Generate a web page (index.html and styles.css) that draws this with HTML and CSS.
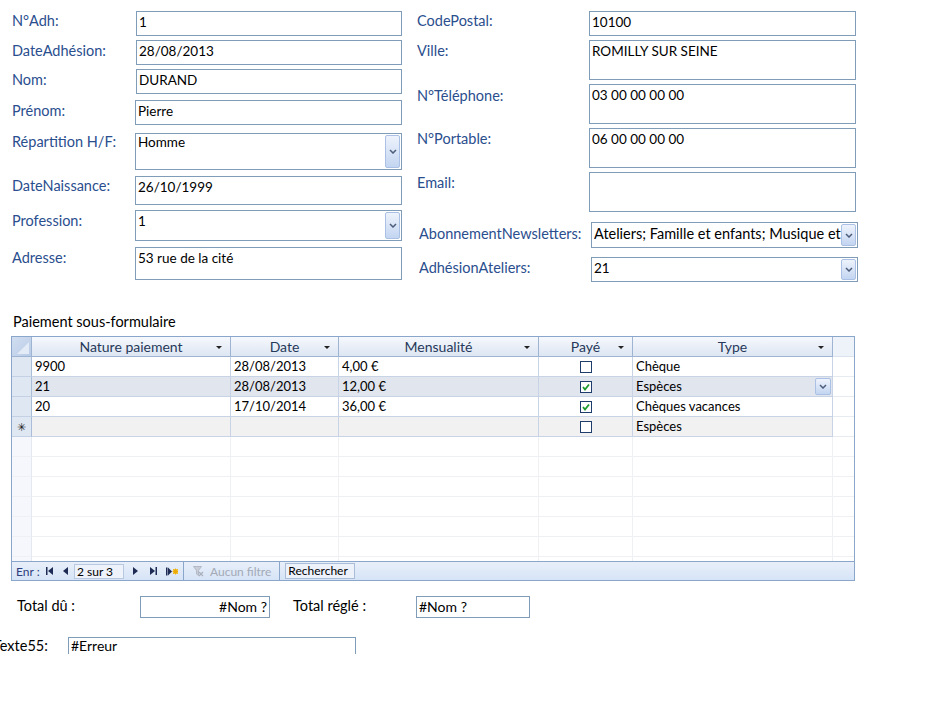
FILE: index.html
```html
<!DOCTYPE html>
<html lang="fr">
<head>
<meta charset="utf-8">
<title>Adhérent</title>
<link rel="stylesheet" href="styles.css">
</head>
<body>
<div class="form">
  <div class="top">
    <div class="col col-left">
      <div class="row m11"><span class="lbl lbl-up">N°Adh:</span><div class="field h25"><span class="val">1</span></div></div>
      <div class="row m4"><span class="lbl">DateAdhésion:</span><div class="field h25"><span class="val">28/08/2013</span></div></div>
      <div class="row m4"><span class="lbl">Nom:</span><div class="field h25"><span class="val">DURAND</span></div></div>
      <div class="row m6 shift"><span class="lbl">Prénom:</span><div class="field h25"><span class="val">Pierre</span></div></div>
      <div class="row m8 shift"><span class="lbl lbl-hi">Répartition H/F:</span><div class="field h37 combo"><span class="val val-hi">Homme</span><span class="dd"><svg width="8" height="5" viewBox="0 0 8 5"><polyline points="1,1 4,4 7,1" fill="none" stroke="#4d5d7c" stroke-width="1.5"/></svg></span></div></div>
      <div class="row m6 shift"><span class="lbl lbl-up">DateNaissance:</span><div class="field h29"><span class="val">26/10/1999</span></div></div>
      <div class="row m5 shift"><span class="lbl">Profession:</span><div class="field h31 combo"><span class="val">1</span><span class="dd"><svg width="8" height="5" viewBox="0 0 8 5"><polyline points="1,1 4,4 7,1" fill="none" stroke="#4d5d7c" stroke-width="1.5"/></svg></span></div></div>
      <div class="row m6 shift"><span class="lbl">Adresse:</span><div class="field h33"><span class="val">53 rue de la cité</span></div></div>
    </div>
    <div class="col col-right">
      <div class="row m11"><span class="lbl lbl-up">CodePostal:</span><div class="field h25"><span class="val">10100</span></div></div>
      <div class="row m4"><span class="lbl">Ville:</span><div class="field h40"><span class="val">ROMILLY SUR SEINE</span></div></div>
      <div class="row m4"><span class="lbl lbl-lo">N°Téléphone:</span><div class="field h40"><span class="val">03 00 00 00 00</span></div></div>
      <div class="row m4"><span class="lbl">N°Portable:</span><div class="field h40"><span class="val">06 00 00 00 00</span></div></div>
      <div class="row m4"><span class="lbl">Email:</span><div class="field h40"><span class="val"></span></div></div>
      <div class="row m10 nudge"><span class="lbl lbl-lo">AbonnementNewsletters:</span><div class="field h26 combo"><span class="val val-big">Ateliers; Famille et enfants; Musique et</span><span class="dd"><svg width="8" height="5" viewBox="0 0 8 5"><polyline points="1,1 4,4 7,1" fill="none" stroke="#4d5d7c" stroke-width="1.5"/></svg></span></div></div>
      <div class="row m9 nudge"><span class="lbl">AdhésionAteliers:</span><div class="field h25 combo"><span class="val">21</span><span class="dd"><svg width="8" height="5" viewBox="0 0 8 5"><polyline points="1,1 4,4 7,1" fill="none" stroke="#4d5d7c" stroke-width="1.5"/></svg></span></div></div>
    </div>
  </div>

  <div class="subform">
    <div class="sub-title">Paiement sous-formulaire</div>
    <div class="sheet">
      <div class="grid">
        <div class="c hd corner"></div>
        <div class="c hd">Nature paiement<span class="tri"></span></div>
        <div class="c hd">Date<span class="tri"></span></div>
        <div class="c hd">Mensualité<span class="tri"></span></div>
        <div class="c hd">Payé<span class="tri"></span></div>
        <div class="c hd">Type<span class="tri"></span></div>
        <div class="c hd fill"></div>

        <div class="c sel"></div>
        <div class="c">9900</div>
        <div class="c">28/08/2013</div>
        <div class="c">4,00 €</div>
        <div class="c ctr"><span class="chk"></span></div>
        <div class="c">Chèque</div>
        <div class="c fill"></div>

        <div class="c sel"></div>
        <div class="c cur">21</div>
        <div class="c cur">28/08/2013</div>
        <div class="c cur">12,00 €</div>
        <div class="c cur ctr"><span class="chk on"><svg width="10" height="10" viewBox="0 0 10 10"><polyline points="2,5 4,7.5 8,2.5" fill="none" stroke="#1f9a2e" stroke-width="1.8"/></svg></span></div>
        <div class="c cur type-cur">Espèces<span class="dd dd-grid"><svg width="8" height="5" viewBox="0 0 8 5"><polyline points="1,1 4,4 7,1" fill="none" stroke="#4d5d7c" stroke-width="1.5"/></svg></span></div>
        <div class="c fill"></div>

        <div class="c sel"></div>
        <div class="c">20</div>
        <div class="c">17/10/2014</div>
        <div class="c">36,00 €</div>
        <div class="c ctr"><span class="chk on"><svg width="10" height="10" viewBox="0 0 10 10"><polyline points="2,5 4,7.5 8,2.5" fill="none" stroke="#1f9a2e" stroke-width="1.8"/></svg></span></div>
        <div class="c">Chèques vacances</div>
        <div class="c fill"></div>

        <div class="c sel star">&#x2733;</div>
        <div class="c nw"></div>
        <div class="c nw"></div>
        <div class="c nw"></div>
        <div class="c nw ctr"><span class="chk"></span></div>
        <div class="c nw">Espèces</div>
        <div class="c fill"></div>

        <div class="c e sel-e"></div><div class="c e"></div><div class="c e"></div><div class="c e"></div><div class="c e"></div><div class="c e"></div><div class="c e"></div>
        <div class="c e sel-e"></div><div class="c e"></div><div class="c e"></div><div class="c e"></div><div class="c e"></div><div class="c e"></div><div class="c e"></div>
        <div class="c e sel-e"></div><div class="c e"></div><div class="c e"></div><div class="c e"></div><div class="c e"></div><div class="c e"></div><div class="c e"></div>
        <div class="c e sel-e"></div><div class="c e"></div><div class="c e"></div><div class="c e"></div><div class="c e"></div><div class="c e"></div><div class="c e"></div>
        <div class="c e sel-e"></div><div class="c e"></div><div class="c e"></div><div class="c e"></div><div class="c e"></div><div class="c e"></div><div class="c e"></div>
        <div class="c e sel-e"></div><div class="c e"></div><div class="c e"></div><div class="c e"></div><div class="c e"></div><div class="c e"></div><div class="c e"></div>
        <div class="c e sel-e"></div><div class="c e"></div><div class="c e"></div><div class="c e"></div><div class="c e"></div><div class="c e"></div><div class="c e"></div>
      </div>
      <div class="nav">
        <span class="enr">Enr :</span>
        <svg class="ic ic-first" width="7" height="8" viewBox="0 0 7 8"><rect x="0" y="0" width="1.5" height="8" fill="#1d2b55"/><polygon points="7,0 7,8 2,4" fill="#1d2b55"/></svg>
        <svg class="ic ic-prev" width="5" height="8" viewBox="0 0 5 8"><polygon points="5,0 5,8 0,4" fill="#1d2b55"/></svg>
        <span class="pos">2 sur 3</span>
        <svg class="ic ic-next" width="5" height="8" viewBox="0 0 5 8"><polygon points="0,0 0,8 5,4" fill="#1d2b55"/></svg>
        <svg class="ic ic-last" width="7" height="8" viewBox="0 0 7 8"><polygon points="0,0 0,8 5,4" fill="#1d2b55"/><rect x="5.5" y="0" width="1.5" height="8" fill="#1d2b55"/></svg>
        <svg class="ic ic-new" width="12" height="9" viewBox="0 0 12 9"><rect x="0" y="0.5" width="1.5" height="8" fill="#1d2b55"/><polygon points="2,0.5 2,8.5 6,4.5" fill="#1d2b55"/><rect x="7" y="2" width="5" height="5" fill="#f2c53d"/><path d="M9.5 1.5v6M6.5 4.5h6M7.5 2.5l4 4M11.5 2.5l-4 4" stroke="#e8a400" stroke-width="0.8"/></svg>
        <span class="sep sep1"></span>
        <svg class="ic ic-filter" width="11" height="11" viewBox="0 0 11 11"><path d="M0.5 0.5h8l-3 4v5l-2-1.5v-3.5z" fill="#c9ced8" stroke="#a9b0bc" stroke-width="0.8"/><path d="M6 6l4 4M10 6l-4 4" stroke="#a9b0bc" stroke-width="1.2"/></svg>
        <span class="nofilter">Aucun filtre</span>
        <span class="sep sep2"></span>
        <span class="search">Rechercher</span>
      </div>
    </div>
  </div>

  <div class="totals">
    <span class="tlbl">Total dû :</span>
    <div class="tbox tbox1">#Nom ?</div>
    <span class="tlbl tlbl2">Total réglé :</span>
    <div class="tbox tbox2">#Nom ?</div>
  </div>

  <div class="texte">
    <span class="xlbl">Texte55:</span>
    <div class="xbox">#Erreur</div>
  </div>
</div>
</body>
</html>
```

FILE: styles.css
```css
* { box-sizing: border-box; }
html, body { margin: 0; padding: 0; background: #fff; }
body { font-family: Lato, "Open Sans", "Liberation Sans", sans-serif; font-size: 14px; color: #000; }

.form { width: 938px; height: 654px; overflow: hidden; }

/* ---------- top form ---------- */
.top { display: flex; gap: 15px; padding-left: 12px; }
.col { display: flex; flex-direction: column; }
.col-left .lbl { width: 124px; }
.col-left .field { width: 266px; }
.col-right .lbl { width: 172px; }
.col-right .field { width: 267px; }

.row { display: flex; align-items: flex-start; }
.row.shift .field { margin-left: -1px; width: 267px; }
.row.nudge .lbl { padding-left: 2px; }
.row.nudge .field { margin-left: 2px; }
.m4 { margin-top: 4px; }
.m5 { margin-top: 5px; }
.m6 { margin-top: 6px; }
.m8 { margin-top: 8px; }
.m9 { margin-top: 9px; }
.m10 { margin-top: 10px; }
.m11 { margin-top: 11px; }

.lbl { color: #2a4e8e; font-size: 14.5px; line-height: 18px; padding-top: 2px; white-space: nowrap; }
.lbl-up { padding-top: 1px; }
.lbl-hi { padding-top: 0; }
.lbl-lo { padding-top: 3px; }

.field { border: 1px solid #7f9db9; background: #fff; display: flex; align-items: flex-start; padding: 1px 1px 1px 2px; }
.h25 { height: 25px; }
.h26 { height: 26px; }
.h29 { height: 29px; }
.h31 { height: 31px; }
.h33 { height: 33px; }
.h37 { height: 37px; }
.h40 { height: 40px; }
.val { flex: 1; font-size: 13.5px; line-height: 18px; padding-top: 0; white-space: nowrap; overflow: hidden; }
.val-hi { margin-top: -2px; }
.val-big { font-size: 14.5px; padding-top: 1px; }

.combo { align-items: stretch; }
.dd { width: 15px; flex: none; border: 1px solid #aac1e5; border-radius: 2px;
  background: linear-gradient(#eef3fc, #c3d5f1); display: flex; align-items: center; justify-content: center; }

/* ---------- subform ---------- */
.subform { padding-left: 11px; margin-top: 31px; }
.sub-title { font-size: 14.5px; line-height: 18px; padding-left: 2px; margin-bottom: 5px; }
.sheet { width: 844px; height: 245px; border: 1px solid #8ba6cb; display: flex; flex-direction: column; }
.grid { height: 224px; overflow: hidden; display: grid;
  grid-template-columns: 20px 199px 108px 200px 94px 200px 21px; grid-auto-rows: 20px; }

.c { border-right: 1px solid #c8d4e6; border-bottom: 1px solid #c8d4e6; padding-left: 3px;
  line-height: 19px; font-size: 13px; white-space: nowrap; overflow: hidden; color: #000; }
.hd { position: relative; text-align: center; padding-left: 0; color: #27395a; font-size: 14px;
  background: linear-gradient(#f6f8fc, #dde6f3); border-right-color: #9fb4d3; border-bottom-color: #9fb4d3; }
.hd .tri { position: absolute; right: 8px; top: 9px; width: 0; height: 0;
  border-left: 3px solid transparent; border-right: 3px solid transparent; border-top: 3px solid #222; }
.corner { background: linear-gradient(135deg, #d2def0 0%, #b8cbe7 100%); position: relative; }
.corner::after { content: ""; position: absolute; right: 2px; bottom: 2px; width: 0; height: 0;
  border-left: 12px solid transparent; border-bottom: 12px solid #e3ebf6; }
.hd.fill { background: #eef2f9; border-right: none; border-bottom-color: #dbe3ef; }
.sel { background: #dfe7f3; border-right-color: #a9bcd8; border-bottom-color: #c4d1e5; padding-left: 0; }
.star { text-align: center; font-size: 11px; color: #222; line-height: 19px; }
.fill { border-right: none; border-bottom-color: #e6ebf2; background: #fff; }
.cur { background: #e0e5ee; }
.nw { background: #f1f1f1; }
.ctr { display: flex; align-items: center; justify-content: center; padding-left: 0; }
.chk { width: 12px; height: 12px; border: 1px solid #1e3d6d; background: #fff; display: flex; align-items: center; justify-content: center; }
.type-cur { display: flex; align-items: center; justify-content: space-between; padding-right: 1px; }
.dd-grid { height: 17px; width: 16px; }
.e { border-right-color: #eef0f4; border-bottom-color: #eef0f4; background: #fff; }
.sel-e { background: #f5f7fc; border-right-color: #e3e8f1; }
.e:nth-child(7n) { border-right: none; }

.nav { height: 19px; border-top: 1px solid #8ba6cb; background: linear-gradient(#e8eff9, #d6e4f7);
  display: flex; align-items: center; font-size: 12px; color: #2d3e7e; }
.enr { margin-left: 4px; width: 30px; }
.ic { flex: none; display: block; }
.ic-prev { margin-left: 10px; }
.pos { margin-left: 6px; width: 50px; height: 15px; border: 1px solid #b7c8e0; background: #eef3fb; color: #000;
  line-height: 13px; padding-left: 2px; }
.ic-next { margin-left: 9px; }
.ic-last { margin-left: 12px; }
.ic-new { margin-left: 9px; }
.sep { width: 1px; height: 18px; background: #8ba6cb; flex: none; }
.sep1 { margin-left: 5px; }
.ic-filter { margin-left: 9px; }
.nofilter { margin-left: 6px; color: #a3aab6; }
.sep2 { margin-left: 8px; }
.search { margin-left: 5px; width: 70px; height: 16px; border: 1px solid #a9bcd8; background: #edf2fa; color: #000;
  line-height: 14px; padding-left: 2px; }

/* ---------- totals ---------- */
.totals { display: flex; align-items: flex-start; margin-top: 15px; padding-left: 17px; }
.tlbl { font-size: 14.5px; line-height: 18px; padding-top: 1px; width: 123px; white-space: nowrap; }
.tlbl2 { width: 123px; margin-left: 23px; }
.tbox { border: 1px solid #7f9db9; height: 22px; line-height: 18px; padding: 1px 2px; font-size: 14px; }
.tbox1 { width: 130px; text-align: right; }
.tbox2 { width: 114px; }

.texte { display: flex; align-items: flex-start; margin-top: 19px; margin-left: -7px; }
.xlbl { font-size: 14.5px; line-height: 15px; padding-top: 1px; width: 75px; }
.xbox { border: 1px solid #7f9db9; border-bottom: none; width: 288px; height: 17px; line-height: 15px; padding: 0 2px; font-size: 14px; }
```
